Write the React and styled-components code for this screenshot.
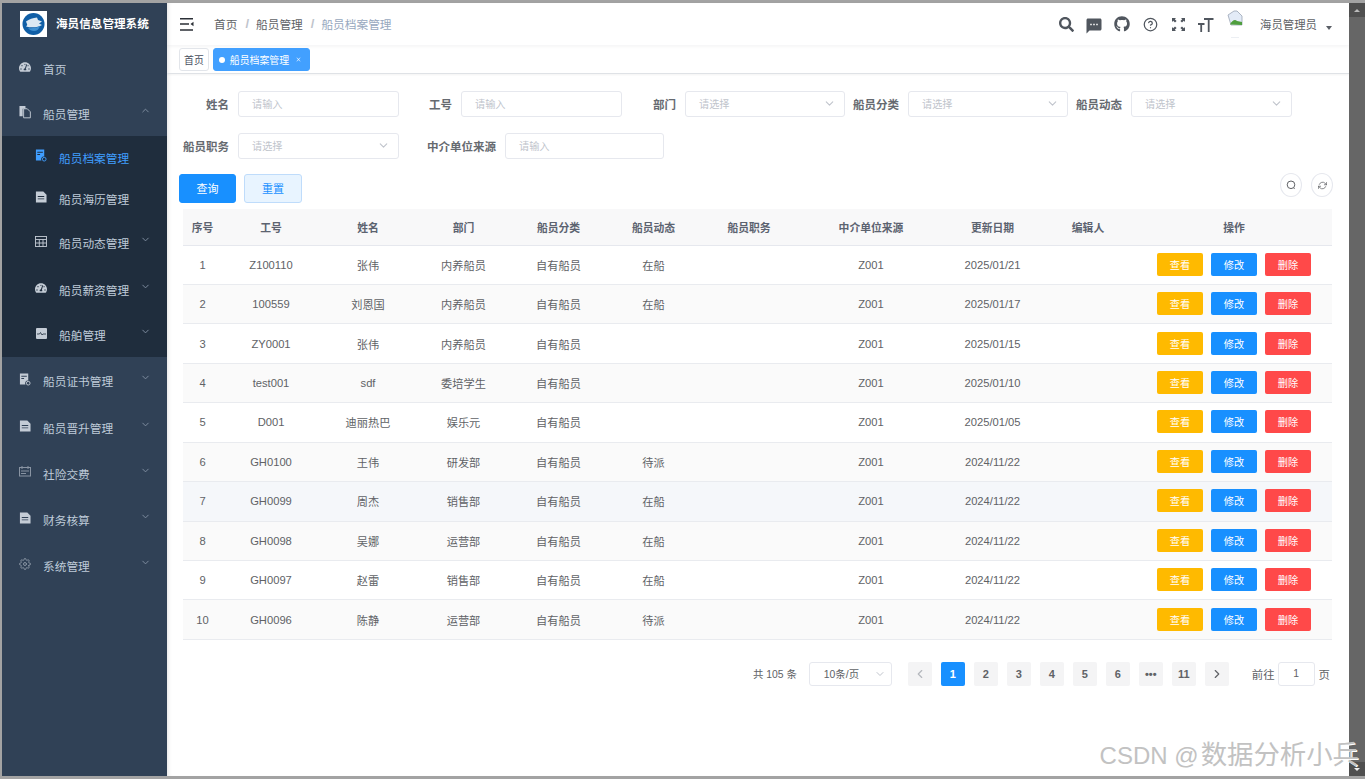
import React from 'react';
import styled, { createGlobalStyle } from 'styled-components';
import { FaSearch, FaGithub, FaTachometerAlt } from 'react-icons/fa';
import { MdSms, MdClose } from 'react-icons/md';
import { FiChevronDown, FiChevronUp, FiChevronLeft, FiChevronRight, FiHelpCircle, FiRefreshCw, FiSettings } from 'react-icons/fi';

const GlobalStyle = createGlobalStyle`
  html, body { margin: 0; padding: 0; background: #a3a3a3; }
  body { font-family: "Liberation Sans", "Noto Sans CJK SC", sans-serif; overflow: hidden; }
  * { box-sizing: border-box; }
`;

const Page = styled.div`
  width: 1365px;
  height: 779px;
  padding: 3px 0 3px 2px;
  display: flex;
  position: relative;
  overflow: hidden;
  background: #a3a3a3;
`;

const Sidebar = styled.aside`
  width: 165px;
  flex: none;
  background: #304156;
  color: #bfcbd9;
`;

const Brand = styled.div`
  height: 42px;
  padding: 8px 0 0 18px;
  display: flex;
  align-items: flex-start;
  gap: 9px;
`;

const BrandTitle = styled.span`
  font-size: 11.6px;
  font-weight: 700;
  color: #fff;
  line-height: 26px;
`;

const SubMenu = styled.div`
  background: #1f2d3d;
`;

const MenuRow = styled.div`
  height: ${(p) => p.$h}px;
  display: flex;
  align-items: center;
  padding-left: ${(p) => (p.$sub ? 33 : 17)}px;
  font-size: 11.7px;
  color: ${(p) => (p.$active ? '#409eff' : '#bfcbd9')};
`;

const MenuIcon = styled.span`
  width: 12px;
  height: 14px;
  margin-right: 12px;
  margin-top: -3px;
  display: flex;
  align-items: center;
  justify-content: center;
  font-size: 12px;
  color: ${(p) => (p.$active ? '#409eff' : '#c4ccd6')};
  opacity: ${(p) => (p.$dim ? 0.6 : 1)};
`;

const MenuText = styled.span`
  flex: 1;
`;

const MenuArrow = styled.span`
  width: 12px;
  margin-right: 15px;
  margin-top: -6px;
  display: flex;
  font-size: 11px;
  color: #8392a4;
`;

const Main = styled.main`
  flex: 1;
  background: #fff;
  box-shadow: inset 4px 0 4px -3px rgba(0, 0, 0, 0.12);
  min-width: 0;
`;

const Header = styled.header`
  height: 42px;
  display: flex;
  align-items: center;
  padding-left: 13px;
  box-shadow: 0 1px 4px rgba(0, 21, 41, 0.06);
`;

const Crumb = styled.span`
  font-size: 11.7px;
  color: ${(p) => (p.$last ? '#97a8be' : '#606266')};
`;

const CrumbSep = styled.span`
  font-size: 13px;
  color: #c0c4cc;
  font-weight: 700;
  margin: 0 7px 0 8px;
`;

const Breadcrumbs = styled.nav`
  display: flex;
  align-items: center;
  margin-left: 20px;
  padding-bottom: 1px;
  flex: 1;
`;

const HeaderTools = styled.div`
  display: flex;
  align-items: center;
`;

const ToolIcon = styled.span`
  width: 28px;
  display: flex;
  justify-content: center;
  font-size: ${(p) => p.$size || 15}px;
  margin-top: ${(p) => p.$drop || 0}px;
  color: #50565e;
`;

const AvatarBox = styled.span`
  width: 16px;
  height: 28px;
  margin-left: 7px;
  display: flex;
`;

const UserName = styled.span`
  font-size: 11.4px;
  color: #606266;
  margin-left: 17px;
`;

const Caret = styled.span`
  width: 0;
  height: 0;
  margin: 8px 17px 0 9px;
  border-left: 3px solid transparent;
  border-right: 3px solid transparent;
  border-top: 4px solid #5a5e66;
`;

const TagsBar = styled.div`
  height: 29px;
  padding: 3px 0 0 12px;
  display: flex;
  gap: 4px;
  border-bottom: 1px solid #dfe2e6;
  box-shadow: 0 1px 2px rgba(0, 0, 0, 0.05);
`;

const Tag = styled.span`
  height: 23px;
  padding: 0 4px;
  display: flex;
  align-items: center;
  gap: 4px;
  font-size: 9.9px;
  border-radius: 3px;
  border: 1px solid ${(p) => (p.$active ? '#42a0ff' : '#e2e5ea')};
  background: ${(p) => (p.$active ? '#42a0ff' : '#fff')};
  color: ${(p) => (p.$active ? '#fff' : '#495060')};
`;

const TagDot = styled.i`
  width: 6px;
  height: 6px;
  border-radius: 50%;
  background: #fff;
  margin-left: 1px;
  margin-right: 1px;
`;

const TagClose = styled(MdClose)`
  width: 7px;
  height: 7px;
  margin: 0 3px 0 2px;
  opacity: 0.85;
`;

const Content = styled.section`
  padding: 17px 17px 0 12px;
`;

const FormRow = styled.div`
  display: flex;
  gap: 8px;
  margin-bottom: 16px;
  padding-left: 4px;
`;

const FormItem = styled.label`
  display: flex;
  align-items: center;
  gap: 9px;
`;

const FieldLabel = styled.span`
  width: ${(p) => p.$w || 46}px;
  text-align: right;
  font-size: 11.5px;
  font-weight: 700;
  color: #666a70;
  white-space: nowrap;
`;

const Field = styled.div`
  width: ${(p) => p.$w || 160}px;
  height: 26px;
  padding: 0 8px 1px 13px;
  border: 1px solid #e6e8ee;
  border-radius: 3px;
  display: flex;
  align-items: center;
  justify-content: space-between;
  font-size: 10.2px;
  color: #c0c4cc;
`;

const ActionRow = styled.div`
  display: flex;
  align-items: flex-start;
  gap: 8px;
  margin-top: -1px;
  height: 35px;
`;

const Button = styled.button`
  width: ${(p) => p.$w}px;
  height: 29px;
  padding: 0 0 2px;
  border-radius: 3px;
  font: 400 11px "Liberation Sans", "Noto Sans CJK SC", sans-serif;
  border: 1px solid ${(p) => (p.$plain ? '#bfdcfb' : '#1890ff')};
  background: ${(p) => (p.$plain ? '#e8f4ff' : '#1890ff')};
  color: ${(p) => (p.$plain ? '#1890ff' : '#fff')};
`;

const RoundTools = styled.div`
  margin-left: auto;
  margin-top: -1px;
  margin-right: -1px;
  display: flex;
  gap: 9px;
`;

const RoundButton = styled.span`
  width: 22px;
  height: 24px;
  border: 1px solid #e6e8ee;
  border-radius: 50%;
  display: flex;
  align-items: center;
  justify-content: center;
  font-size: 9px;
  color: #606266;
`;

const TableWrap = styled.div`
  margin-left: 4px;
`;

const Table = styled.table`
  width: 1149px;
  table-layout: fixed;
  border-collapse: collapse;
  font-size: 11.2px;
  color: #606266;
  text-align: center;
`;

const HeadCell = styled.th`
  height: 36px;
  padding: 0;
  background: #f8f8f9;
  border-bottom: 1px solid #e6e8ee;
  font-size: 10.8px;
  font-weight: 700;
  color: #5c6370;
`;

const Row = styled.tr`
  background: ${(p) => (p.$hover ? '#f5f7fa' : p.$striped ? '#fafafa' : '#fff')};
`;

const Cell = styled.td`
  height: 39.45px;
  padding: 0;
  border-bottom: 1px solid #e9ebef;
`;

const OpGroup = styled.div`
  display: flex;
  gap: 8px;
  justify-content: flex-end;
  padding-right: 21px;
  margin-top: -1px;
`;

const OpButton = styled.span`
  width: 46px;
  height: 23px;
  border-radius: 2px;
  background: ${(p) => p.$color};
  color: #fff;
  font-size: 10.2px;
  display: flex;
  align-items: center;
  justify-content: center;
`;

const Pager = styled.div`
  margin-top: 22px;
  padding-right: 2px;
  display: flex;
  align-items: center;
  justify-content: flex-end;
  font-size: 10.4px;
  color: #606266;
`;

const PagerSelect = styled.div`
  width: 83px;
  height: 24px;
  margin: 0 16px 0 12px;
  padding: 0 5px 0 14px;
  border: 1px solid #e6e8ee;
  border-radius: 3px;
  display: flex;
  align-items: center;
  justify-content: space-between;
`;

const PageList = styled.div`
  display: flex;
  gap: 9px;
  margin-right: 23px;
`;

const PageBtn = styled.span`
  width: 24px;
  height: 24px;
  border-radius: 2px;
  display: flex;
  align-items: center;
  justify-content: center;
  font-size: ${(p) => (p.$arrow ? 14 : 11)}px;
  font-weight: 700;
  background: ${(p) => (p.$active ? '#1890ff' : '#f4f4f5')};
  color: ${(p) => (p.$active ? '#fff' : p.$muted ? '#b4b7bd' : '#606266')};
`;

const JumpText = styled.span`
  font-size: 11.4px;
`;

const JumpInput = styled.div`
  width: 37px;
  height: 24px;
  margin: 0 4px 0 3px;
  border: 1px solid #e6e8ee;
  border-radius: 3px;
  display: flex;
  align-items: center;
  justify-content: center;
`;

const Scrollbar = styled.div`
  width: 16px;
  flex: none;
  background: #666;
  display: flex;
  flex-direction: column;
  justify-content: space-between;
`;

const ScrollCap = styled.span`
  height: 14px;
  background: #4f4f4f;
  display: flex;
  align-items: center;
  justify-content: center;
  &::after {
    content: '';
    border-left: 3px solid transparent;
    border-right: 3px solid transparent;
    ${(p) => (p.$up ? 'border-bottom: 3px solid #bbb;' : 'border-top: 3px solid #eee;')}
  }
`;

const Watermark = styled.div`
  position: absolute;
  right: 6px;
  bottom: 5px;
  font-size: 26.4px;
  line-height: 36px;
  color: #c2c2c2;
  text-shadow: 1px 1px 0 #fff;
  white-space: nowrap;
`;

const WatermarkLatin = styled.span`
  font-size: 24px;
  margin-right: 2px;
`;

const Logo = () => (
  <svg width="27" height="26" viewBox="0 0 27 26">
    <rect width="27" height="26" fill="#fff" />
    <circle cx="13.5" cy="13" r="11" fill="#0f5ea6" />
    <path d="M6 10.500c3-2.500 7-3.500 11-4l1 2.500 4 1.500-3 2 3 1.500c-4 2.500-10 3-16 1.500 1-1 1.500-1.500 1-2.500z" fill="#dce8f2" />
    <path d="M8 17c4 .5 8 0 12-2-1 3-3 5-6 5-2.500 0-4.500-1-6-3z" fill="#3f8fd0" />
  </svg>
);

const HamburgerIcon = () => (
  <svg width="14" height="13" viewBox="0 0 14 13">
    <path d="M0 .8h13M0 6h9M0 12h13" stroke="#2b2f36" strokeWidth="1.400" fill="none" />
    <path d="M13.500 3.800v4.400L10.500 6z" fill="#2b2f36" />
  </svg>
);

const FullscreenIcon = () => (
  <svg width="15" height="15" viewBox="0 0 15 15" fill="#50565e">
    <path d="M1 1h4L3.800 2.200 5.600 4 4 5.600 2.200 3.800 1 5zM14 1v4l-1.200-1.200L11 5.600 9.400 4l1.800-1.800L10 1zM1 14v-4l1.200 1.200L4 9.400 5.600 11l-1.800 1.800L5 14zM14 14h-4l1.200-1.200L9.400 11 11 9.400l1.800 1.800L14 10z" />
  </svg>
);

const FontSizeIcon = () => (
  <svg width="16" height="15" viewBox="0 0 16 15" fill="none" stroke="#50565e" strokeWidth="1.800">
    <path d="M6 2h9.500M10.700 2v13M0 7h6.500M3.200 7v8" />
  </svg>
);

const BrokenImage = () => (
  <svg width="16" height="28" viewBox="0 0 16 28">
    <path d="M1 5 7 1h3l5 5v9H4z" fill="#e3ebf7" stroke="#9aa4b5" strokeWidth=".8" />
    <path d="M3 14.500c2-4 5-5.500 7-3.500l5 1v3z" fill="#4f9e3d" />
    <path d="M4 27.500h8" stroke="#eceff3" strokeWidth="1" />
  </svg>
);

const RoundSearchIcon = () => (
  <svg width="10" height="10" viewBox="0 0 10 10" fill="none" stroke="#606266" strokeWidth="1">
    <circle cx="5" cy="4.800" r="3.800" />
    <path d="M7.500 7.700 8.600 8.800" />
  </svg>
);

const IdCardIcon = () => (
  <svg width="13" height="13" viewBox="0 0 13 13" fill="currentColor">
    <path d="M1 0h9v7.500a3 3 0 0 0-3 4.500H1zM2.500 2.500v1h6v-1zM2.500 5v1h3V5z" fillRule="evenodd" />
    <circle cx="10" cy="10.500" r="2" fill="none" stroke="currentColor" strokeWidth="1" />
  </svg>
);

const CopyIcon = () => (
  <svg width="13" height="14" viewBox="0 0 13 14">
    <path d="M5 3.500h4l3.300 3.300v6.500H5z" fill="none" stroke="currentColor" strokeWidth="1" />
    <path d="M.5.500h6.500v3H4v8H.5z" fill="currentColor" />
  </svg>
);

const FileIcon = () => (
  <svg width="13" height="12" viewBox="0 0 13 12" fill="currentColor">
    <path d="M1 0h8l3.500 3.500V12H1zM3 5v1h7V5zM3 7.500v1h7v-1z" fillRule="evenodd" />
  </svg>
);

const GridIcon = () => (
  <svg width="12" height="11" viewBox="0 0 12 11" fill="none" stroke="currentColor" strokeWidth=".9">
    <rect x=".5" y=".5" width="11" height="10" />
    <path d="M.5 3.500h11M.5 7h11M4.300 3.500V10.500M8 3.500V10.500" />
  </svg>
);

const MonitorIcon = () => (
  <svg width="11" height="11" viewBox="0 0 11 11">
    <rect width="11" height="11" rx="1" fill="#c4ccd6" />
    <path d="M1 6h2.500l1-1.500 1.500 2.500 1-1h3" stroke="#1f2d3d" strokeWidth=".8" fill="none" />
  </svg>
);

const CalendarIcon = () => (
  <svg width="12" height="11" viewBox="0 0 12 11" fill="none" stroke="currentColor">
    <rect x=".5" y="1.500" width="11" height="8.500" />
    <path d="M3 0v3M9 0v3M2 5h8M2 7.500h5" />
  </svg>
);

const menuBefore = [
  { label: '首页', icon: <FaTachometerAlt />, h: 46, leaf: true },
  { label: '船员管理', icon: <CopyIcon />, h: 45, open: true },
];

const subMenu = [
  { label: '船员档案管理', icon: <IdCardIcon />, h: 42, active: true, leaf: true },
  { label: '船员海历管理', icon: <FileIcon />, h: 41, leaf: true },
  { label: '船员动态管理', icon: <GridIcon />, h: 47 },
  { label: '船员薪资管理', icon: <FaTachometerAlt />, h: 46 },
  { label: '船舶管理', icon: <MonitorIcon />, h: 45 },
];

const menuAfter = [
  { label: '船员证书管理', icon: <IdCardIcon />, h: 47 },
  { label: '船员晋升管理', icon: <FileIcon />, h: 46 },
  { label: '社险交费', icon: <CalendarIcon />, h: 46, dim: true },
  { label: '财务核算', icon: <FileIcon />, h: 46 },
  { label: '系统管理', icon: <FiSettings />, h: 46, dim: true },
];

const columns = [
  ['序号', 39], ['工号', 98], ['姓名', 96], ['部门', 95], ['船员分类', 95], ['船员动态', 95],
  ['船员职务', 96], ['中介单位来源', 148], ['更新日期', 95], ['编辑人', 96], ['操作', 196],
];

const rows = [
  ['Z100110', '张伟', '内养船员', '在船', '2025/01/21'],
  ['100559', '刘恩国', '内养船员', '在船', '2025/01/17'],
  ['ZY0001', '张伟', '内养船员', '', '2025/01/15'],
  ['test001', 'sdf', '委培学生', '', '2025/01/10'],
  ['D001', '迪丽热巴', '娱乐元', '', '2025/01/05'],
  ['GH0100', '王伟', '研发部', '待派', '2024/11/22'],
  ['GH0099', '周杰', '销售部', '在船', '2024/11/22'],
  ['GH0098', '吴娜', '运营部', '在船', '2024/11/22'],
  ['GH0097', '赵雷', '销售部', '在船', '2024/11/22'],
  ['GH0096', '陈静', '运营部', '待派', '2024/11/22'],
];

const MenuItem = ({ item, sub }) => (
  <MenuRow $h={item.h} $sub={sub} $active={item.active}>
    <MenuIcon $active={item.active} $dim={item.dim}>{item.icon}</MenuIcon>
    <MenuText>{item.label}</MenuText>
    {!item.leaf && <MenuArrow>{item.open ? <FiChevronUp /> : <FiChevronDown />}</MenuArrow>}
  </MenuRow>
);

const FormField = ({ label, placeholder, select, labelWidth, width }) => (
  <FormItem>
    <FieldLabel $w={labelWidth}>{label}</FieldLabel>
    <Field $w={width}>
      {placeholder}
      {select && <FiChevronDown size={13} />}
    </Field>
  </FormItem>
);

const App = () => {
  return (
    <Page>
      <GlobalStyle />
      <Sidebar>
        <Brand>
          <Logo />
          <BrandTitle>海员信息管理系统</BrandTitle>
        </Brand>
        {menuBefore.map((m) => <MenuItem key={m.label} item={m} />)}
        <SubMenu>
          {subMenu.map((m) => <MenuItem key={m.label} item={m} sub />)}
        </SubMenu>
        {menuAfter.map((m) => <MenuItem key={m.label} item={m} />)}
      </Sidebar>

      <Main>
        <Header>
          <HamburgerIcon />
          <Breadcrumbs>
            <Crumb>首页</Crumb>
            <CrumbSep>/</CrumbSep>
            <Crumb>船员管理</Crumb>
            <CrumbSep>/</CrumbSep>
            <Crumb $last>船员档案管理</Crumb>
          </Breadcrumbs>
          <HeaderTools>
            <ToolIcon><FaSearch /></ToolIcon>
            <ToolIcon $size={18} $drop={3}><MdSms /></ToolIcon>
            <ToolIcon $size={16}><FaGithub /></ToolIcon>
            <ToolIcon><FiHelpCircle /></ToolIcon>
            <ToolIcon><FullscreenIcon /></ToolIcon>
            <ToolIcon><FontSizeIcon /></ToolIcon>
            <AvatarBox><BrokenImage /></AvatarBox>
            <UserName>海员管理员</UserName>
            <Caret />
          </HeaderTools>
        </Header>

        <TagsBar>
          <Tag>首页</Tag>
          <Tag $active>
            <TagDot />
            船员档案管理
            <TagClose />
          </Tag>
        </TagsBar>

        <Content>
          <FormRow>
            <FormField label="姓名" placeholder="请输入" width={161} />
            <FormField label="工号" placeholder="请输入" labelWidth={45} width={161} />
            <FormField label="部门" placeholder="请选择" select />
            <FormField label="船员分类" placeholder="请选择" select />
            <FormField label="船员动态" placeholder="请选择" select width={161} />
          </FormRow>
          <FormRow>
            <FormField label="船员职务" placeholder="请选择" select width={161} />
            <FormField label="中介单位来源" placeholder="请输入" labelWidth={89} width={159} />
          </FormRow>

          <ActionRow>
            <Button $w={57}>查询</Button>
            <Button $w={58} $plain>重置</Button>
            <RoundTools>
              <RoundButton><RoundSearchIcon /></RoundButton>
              <RoundButton><FiRefreshCw /></RoundButton>
            </RoundTools>
          </ActionRow>

          <TableWrap>
            <Table>
              <colgroup>
                {columns.map(([name, w]) => <col key={name} width={w} />)}
              </colgroup>
              <thead>
                <tr>
                  {columns.map(([name]) => <HeadCell key={name}>{name}</HeadCell>)}
                </tr>
              </thead>
              <tbody>
                {rows.map((r, i) => (
                  <Row key={r[0]} $striped={i % 2 === 1} $hover={i === 6}>
                    <Cell>{i + 1}</Cell>
                    <Cell>{r[0]}</Cell>
                    <Cell>{r[1]}</Cell>
                    <Cell>{r[2]}</Cell>
                    <Cell>自有船员</Cell>
                    <Cell>{r[3]}</Cell>
                    <Cell />
                    <Cell>Z001</Cell>
                    <Cell>{r[4]}</Cell>
                    <Cell />
                    <Cell>
                      <OpGroup>
                        <OpButton $color="#ffba00">查看</OpButton>
                        <OpButton $color="#1890ff">修改</OpButton>
                        <OpButton $color="#ff4949">删除</OpButton>
                      </OpGroup>
                    </Cell>
                  </Row>
                ))}
              </tbody>
            </Table>
          </TableWrap>

          <Pager>
            <span>共 105 条</span>
            <PagerSelect>
              10条/页
              <FiChevronDown size={12} color="#c0c4cc" />
            </PagerSelect>
            <PageList>
              <PageBtn $muted $arrow><FiChevronLeft /></PageBtn>
              <PageBtn $active>1</PageBtn>
              {['2', '3', '4', '5', '6', '•••', '11'].map((n) => <PageBtn key={n}>{n}</PageBtn>)}
              <PageBtn $arrow><FiChevronRight /></PageBtn>
            </PageList>
            <JumpText>前往</JumpText>
            <JumpInput>1</JumpInput>
            <JumpText>页</JumpText>
          </Pager>
        </Content>
      </Main>

      <Scrollbar>
        <ScrollCap $up />
        <ScrollCap />
      </Scrollbar>

      <Watermark><WatermarkLatin>CSDN @</WatermarkLatin>数据分析小兵</Watermark>
    </Page>
  );
};

export default App;
